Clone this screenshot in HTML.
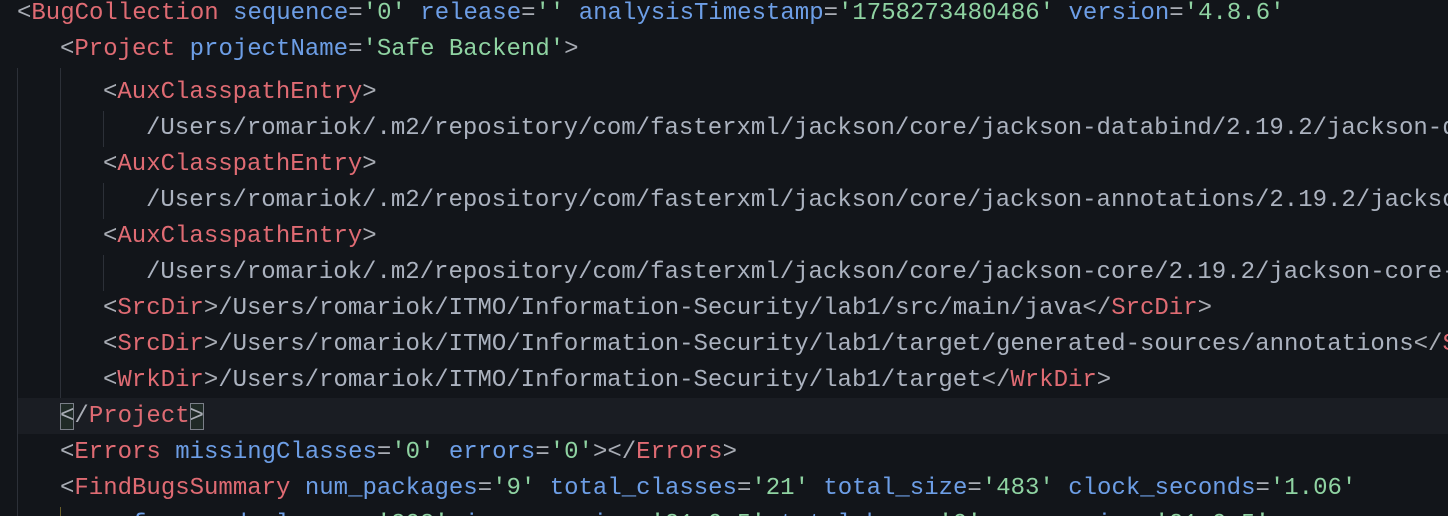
<!DOCTYPE html>
<html><head><meta charset="utf-8"><style>
html,body{margin:0;padding:0;width:1448px;height:516px;overflow:hidden;background:#12151a;}
#w{position:absolute;left:0;top:0;width:1448px;height:516px;overflow:hidden;}
.l{position:absolute;left:0;height:36px;line-height:36px;white-space:pre;font-family:"Liberation Mono",monospace;font-size:24px;color:#abb2bf;}
.t{color:#df6b73}.a{color:#6d9ee6}.s{color:#8fd3a2}.p{color:#a9adb5}
.g{position:absolute;width:1px;background:#2c3038}
.hl{position:absolute;left:17px;right:0;top:398px;height:36px;background:#1a1d23}
.box{outline:1px solid #7a7f88;outline-offset:-1px;background:#1f2a26}
.sticky{position:absolute;left:0;top:0;width:1448px;height:68px;background:#12151a;overflow:hidden}
</style></head><body><div id="w">
<div class="hl"></div>
<div class="g" style="left:17px;top:68px;height:448px"></div>
<div class="g" style="left:60px;top:68px;height:330px"></div>
<div class="g" style="left:103px;top:111px;height:36px"></div>
<div class="g" style="left:103px;top:183px;height:36px"></div>
<div class="g" style="left:103px;top:255px;height:36px"></div>
<div class="g" style="left:60px;top:507px;height:9px;background:#6b5f2a"></div>

<div class="l" style="top:75px;left:103px"><span class="p">&lt;</span><span class="t">AuxClasspathEntry</span><span class="p">&gt;</span></div>
<div class="l" style="top:111px;left:146px">/Users/romariok/.m2/repository/com/fasterxml/jackson/core/jackson-databind/2.19.2/jackson-databind-2.19.2.jar</div>
<div class="l" style="top:147px;left:103px"><span class="p">&lt;</span><span class="t">AuxClasspathEntry</span><span class="p">&gt;</span></div>
<div class="l" style="top:183px;left:146px">/Users/romariok/.m2/repository/com/fasterxml/jackson/core/jackson-annotations/2.19.2/jackson-annotations.jar</div>
<div class="l" style="top:219px;left:103px"><span class="p">&lt;</span><span class="t">AuxClasspathEntry</span><span class="p">&gt;</span></div>
<div class="l" style="top:255px;left:146px">/Users/romariok/.m2/repository/com/fasterxml/jackson/core/jackson-core/2.19.2/jackson-core-2.19.2.jar</div>
<div class="l" style="top:291px;left:103px"><span class="p">&lt;</span><span class="t">SrcDir</span><span class="p">&gt;</span>/Users/romariok/ITMO/Information-Security/lab1/src/main/java<span class="p">&lt;/</span><span class="t">SrcDir</span><span class="p">&gt;</span></div>
<div class="l" style="top:327px;left:103px"><span class="p">&lt;</span><span class="t">SrcDir</span><span class="p">&gt;</span>/Users/romariok/ITMO/Information-Security/lab1/target/generated-sources/annotations<span class="p">&lt;/</span><span class="t">SrcDir</span><span class="p">&gt;</span></div>
<div class="l" style="top:363px;left:103px"><span class="p">&lt;</span><span class="t">WrkDir</span><span class="p">&gt;</span>/Users/romariok/ITMO/Information-Security/lab1/target<span class="p">&lt;/</span><span class="t">WrkDir</span><span class="p">&gt;</span></div>
<div class="l" style="top:399px;left:60px"><span class="p box">&lt;</span><span class="p">/</span><span class="t">Project</span><span class="p box">&gt;</span></div>
<div class="l" style="top:435px;left:60px"><span class="p">&lt;</span><span class="t">Errors</span> <span class="a">missingClasses</span><span class="p">=</span><span class="s">'0'</span> <span class="a">errors</span><span class="p">=</span><span class="s">'0'</span><span class="p">&gt;&lt;/</span><span class="t">Errors</span><span class="p">&gt;</span></div>
<div class="l" style="top:471px;left:60px"><span class="p">&lt;</span><span class="t">FindBugsSummary</span> <span class="a">num_packages</span><span class="p">=</span><span class="s">'9'</span> <span class="a">total_classes</span><span class="p">=</span><span class="s">'21'</span> <span class="a">total_size</span><span class="p">=</span><span class="s">'483'</span> <span class="a">clock_seconds</span><span class="p">=</span><span class="s">'1.06'</span></div>
<div class="l" style="top:507px;left:103px"><span class="a">referenced_classes</span><span class="p">=</span><span class="s">'303'</span> <span class="a">java_version</span><span class="p">=</span><span class="s">'21.0.5'</span> <span class="a">total_bugs</span><span class="p">=</span><span class="s">'0'</span> <span class="a">vm_version</span><span class="p">=</span><span class="s">'21.0.5'</span></div>

<div class="sticky">
<div class="l" style="top:-4px;left:17px"><span class="p">&lt;</span><span class="t">BugCollection</span> <span class="a">sequence</span><span class="p">=</span><span class="s">'0'</span> <span class="a">release</span><span class="p">=</span><span class="s">''</span> <span class="a">analysisTimestamp</span><span class="p">=</span><span class="s">'1758273480486'</span> <span class="a">version</span><span class="p">=</span><span class="s">'4.8.6'</span></div>
<div class="l" style="top:32px;left:60px"><span class="p">&lt;</span><span class="t">Project</span> <span class="a">projectName</span><span class="p">=</span><span class="s">'Safe Backend'</span><span class="p">&gt;</span></div>
</div>
</div></body></html>
